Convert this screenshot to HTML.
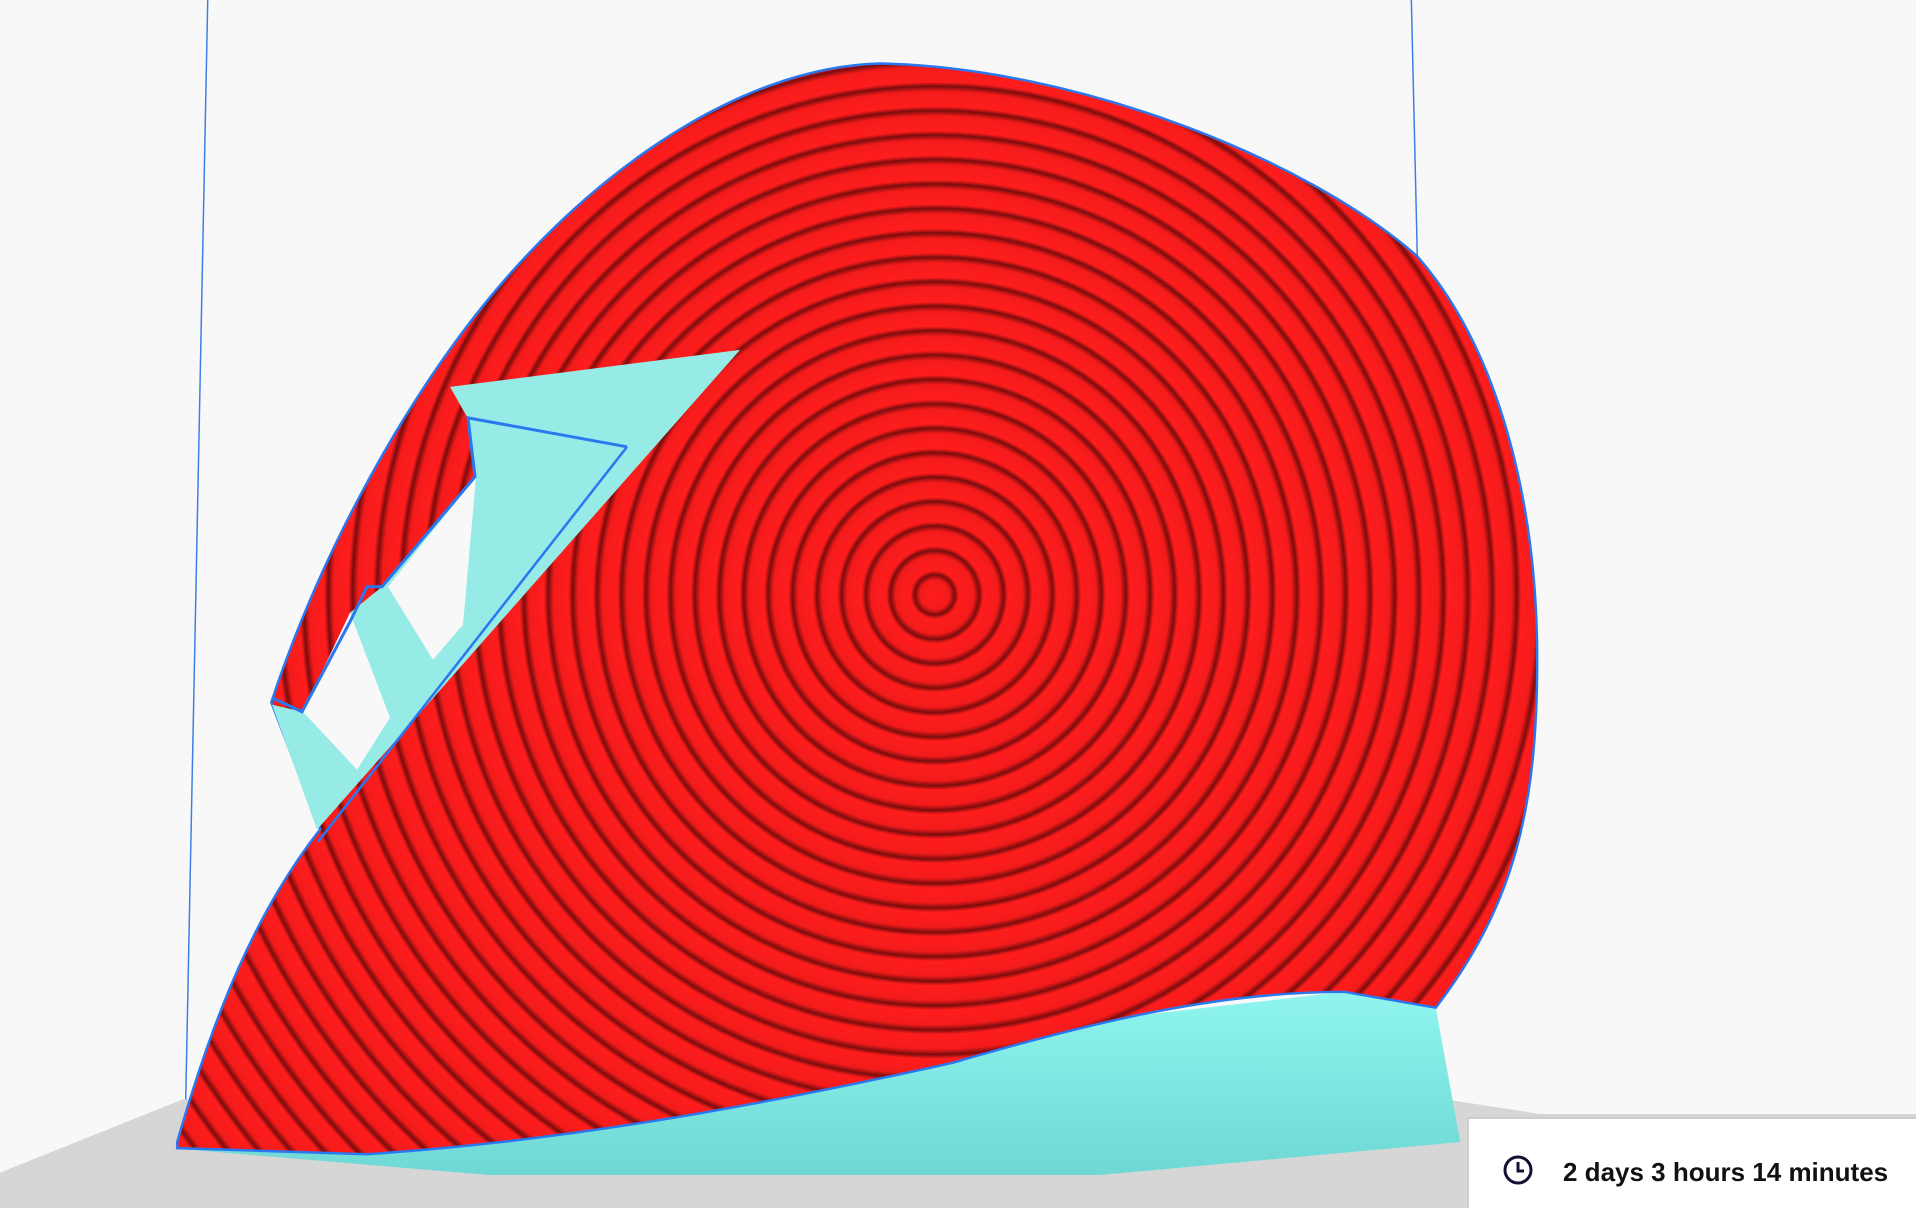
<!DOCTYPE html>
<html><head><style>
html,body{margin:0;padding:0;width:1916px;height:1208px;overflow:hidden;background:#f8f8f8;font-family:"Liberation Sans",sans-serif}
#v{position:absolute;left:0;top:0}
#p{position:absolute;left:1467px;top:1117px;width:449px;height:91px;background:#fff;border-top:2px solid #ccc;border-left:2px solid #ccc;box-sizing:border-box}
#t{position:absolute;left:94px;top:38px;font-size:26px;font-weight:bold;color:#111;white-space:nowrap}
</style></head><body>
<svg id="v" width="1916" height="1208" viewBox="0 0 1568 989" preserveAspectRatio="none">
<defs>
<radialGradient id="r" gradientUnits="userSpaceOnUse" cx="765" cy="487" r="20" spreadMethod="repeat">
<stop offset="0" stop-color="#ff1d1d"/><stop offset="0.6" stop-color="#f41b1b"/><stop offset="0.82" stop-color="#7a0c0c"/><stop offset="0.95" stop-color="#e01818"/><stop offset="1" stop-color="#ff1d1d"/>
</radialGradient>
<linearGradient id="c" x1="0" y1="0" x2="0" y2="1"><stop offset="0" stop-color="#8ff5ee"/><stop offset="1" stop-color="#6fd8d4"/></linearGradient>
</defs>
<polygon points="0,989 0,960 150,900 1150,895 1260,912 1568,912 1568,989" fill="#d6d6d6"/>
<line x1="170" y1="0" x2="152" y2="900" stroke="#3a7ee8" stroke-width="1.2"/>
<line x1="1155" y1="0" x2="1160" y2="215" stroke="#3a7ee8" stroke-width="1.2"/>
<polygon points="140,940 300,945 600,905 900,835 1100,812 1175,825 1195,935 900,962 400,962" fill="url(#c)"/>
<path d="M145,935 C175,830 210,745 262,679 L222,575 C260,460 320,350 380,270 C470,150 600,55 720,52 C880,55 1070,130 1160,210 C1230,290 1258,420 1258,540 C1258,660 1240,740 1175,825 L1100,812 C1000,812 900,835 780,870 C600,910 450,935 300,945 L145,940 Z" fill="url(#r)" stroke="#2a78f0" stroke-width="2"/>
<g transform="scale(0.8184)">
<polygon points="450,387 740,350 317,830 272,705 303,712 350,613 382,587 476,477 467,417" fill="#96ebe6"/>
<polygon points="476,477 388,587 433,660 463,625" fill="#f8f8f8"/>
<polygon points="303,712 350,613 390,718 357,770" fill="#f8f8f8"/>
<polyline points="272,698 302,712 350,622 367,587 382,587 475,477 468,418 627,447" fill="none" stroke="#2a78f0" stroke-width="3"/>
<line x1="627" y1="447" x2="318" y2="842" stroke="#2a78f0" stroke-width="2.5"/>
</g>
</svg>
<div id="p">
<svg style="position:absolute;left:33px;top:35px" width="32" height="32" viewBox="0 0 32 32"><circle cx="16" cy="16" r="13" fill="none" stroke="#111133" stroke-width="3"/><path d="M16 8V17H22" fill="none" stroke="#111133" stroke-width="3"/></svg>
<div id="t">2 days 3 hours 14 minutes</div>
</div>
</body></html>
